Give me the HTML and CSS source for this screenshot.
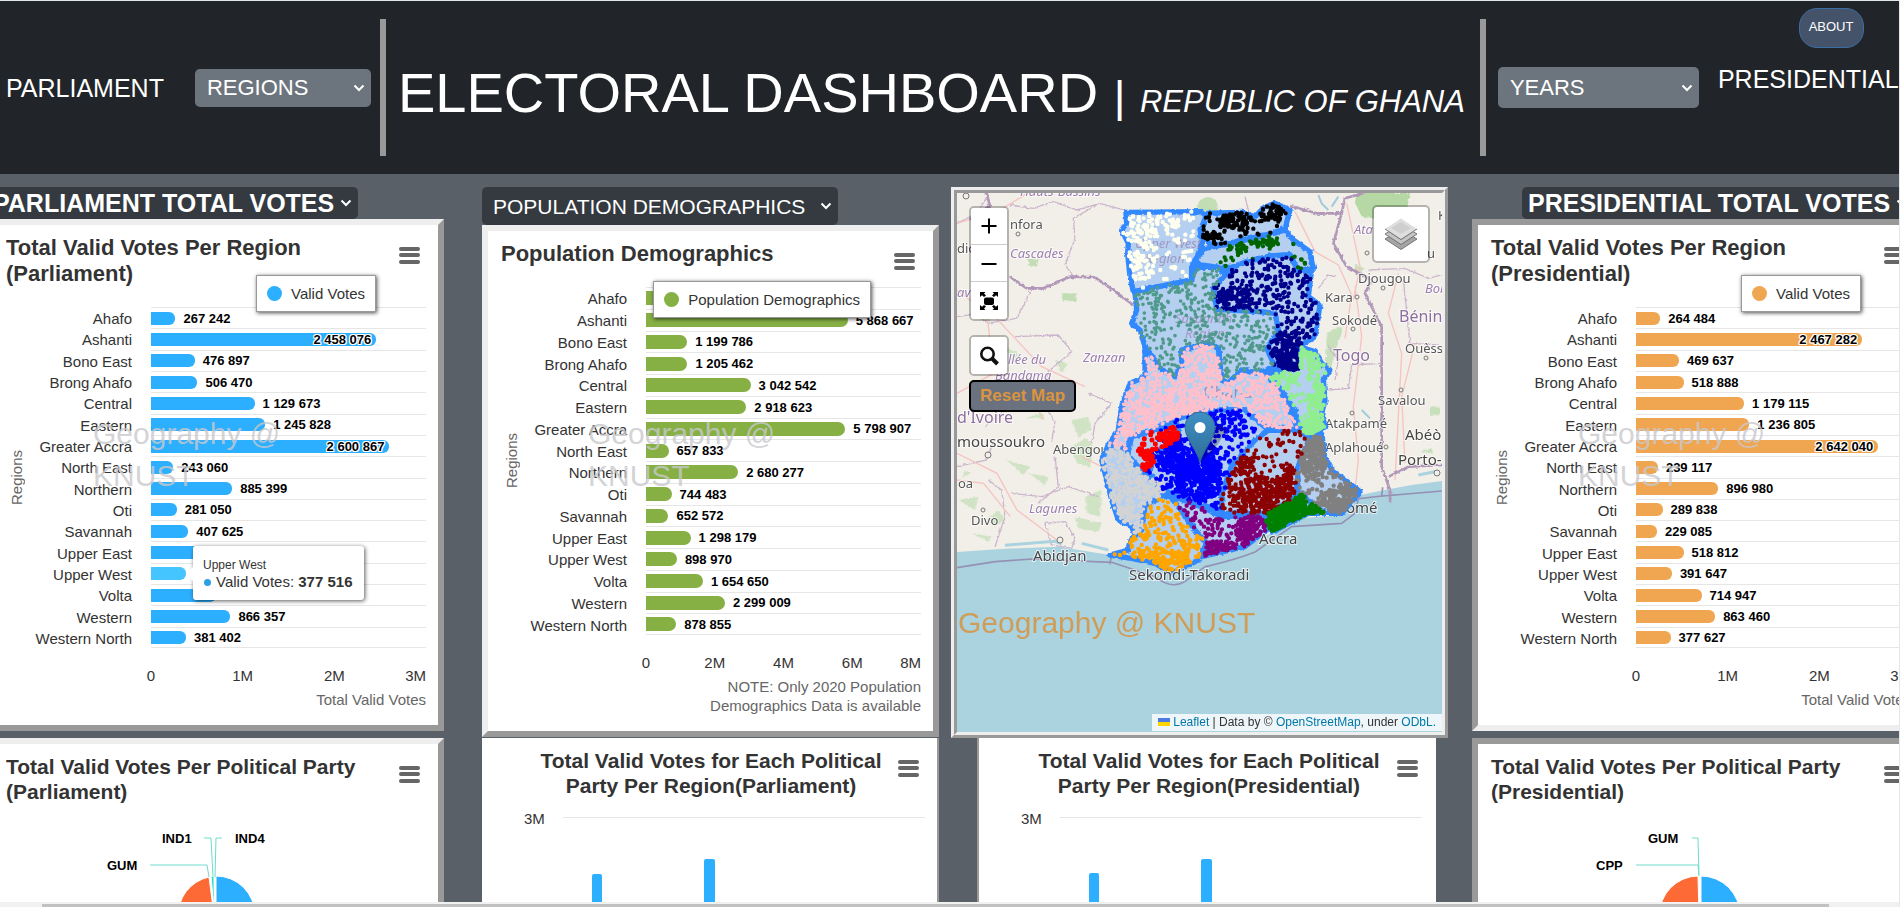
FILE: index.html
```
<!DOCTYPE html>
<html lang="en">
<head>
<meta charset="utf-8">
<title>Electoral Dashboard</title>
<link rel="stylesheet" href="styles.css">
</head>
<body>
<header class="topbar">
  <label class="topbar-label" for="regions">PARLIAMENT</label>
  <span class="pick pick-regions">
    <select id="regions"><option>REGIONS</option></select>
    <svg class="chev" viewBox="0 0 12 8"><path d="M1.5 1.5 6 6l4.500-4.500"/></svg>
  </span>
  <span class="rule"></span>
  <h1 class="brand">ELECTORAL DASHBOARD <span class="brand-bar">|</span> <em>REPUBLIC OF GHANA</em></h1>
  <span class="rule"></span>
  <span class="pick pick-years">
    <select id="years"><option>YEARS</option></select>
    <svg class="chev" viewBox="0 0 12 8"><path d="M1.500 1.500 6 6l4.500-4.500"/></svg>
  </span>
  <div class="topbar-end">
    <button class="about" type="button">ABOUT</button>
    <label class="topbar-label" for="years">PRESIDENTIAL</label>
  </div>
</header>

<main class="board">
  <section class="col col-parliament">
    <span class="pick tab tab-bold">
      <select aria-label="Parliament data"><option>PARLIAMENT TOTAL VOTES</option></select>
      <svg class="chev" viewBox="0 0 12 8"><path d="M1.500 1.500 6 6l4.500-4.500"/></svg>
    </span>
    <article class="card raised chart-card">
      <h2 class="title">Total Valid Votes Per Region (Parliament)</h2>
      <button class="menu" type="button" aria-label="Chart menu"></button>
      <div class="plot"><span class="ylabel">Regions</span><div class="rows" id="rows-parliament"></div></div>
      <div class="axis axis-3"><span>0</span><span>1M</span><span>2M</span><span class="last">3M</span></div>
      <p class="xlabel">Total Valid Votes</p>
      <div class="legend"><i class="dot blue"></i>Valid Votes</div>
      <p class="watermark">Geography @ KNUST</p>
    </article>
    <article class="card raised party-card">
      <h2 class="title small">Total Valid Votes Per Political Party (Parliament)</h2>
      <button class="menu" type="button" aria-label="Chart menu"></button>
      <svg class="pie" width="445" height="180" viewBox="0 0 445 180">
        <path class="slice blue-fill" d="M223 72A39 39 0 0 1 223 150Z"/>
        <path class="slice orange-fill" d="M221 150A39 39 0 0 1 216 73L221 111Z"/>
        <path class="slice teal-fill" d="M218 72.500h3l.5 38z"/>
        <path class="link" d="M211 34h7l2 39"/><path class="link" d="M229 34h-6l-1 39"/><path class="link" d="M157 61h57l2 12"/>
        <text x="169" y="39">IND1</text><text x="242" y="39">IND4</text><text x="114" y="66">GUM</text>
      </svg>
    </article>
  </section>

  <section class="col col-population">
    <span class="pick tab">
      <select aria-label="Population data"><option>POPULATION DEMOGRAPHICS</option></select>
      <svg class="chev" viewBox="0 0 12 8"><path d="M1.500 1.500 6 6l4.500-4.500"/></svg>
    </span>
    <article class="card raised chart-card">
      <h2 class="title">Population Demographics</h2>
      <button class="menu" type="button" aria-label="Chart menu"></button>
      <div class="plot"><span class="ylabel">Regions</span><div class="rows tall" id="rows-population"></div></div>
      <div class="axis axis-4"><span>0</span><span>2M</span><span>4M</span><span>6M</span><span class="last">8M</span></div>
      <p class="xlabel">NOTE: Only 2020 Population<br>Demographics Data is available</p>
      <div class="legend"><i class="dot green"></i>Population Demographics</div>
      <p class="watermark">Geography @ KNUST</p>
    </article>
    <article class="card flat party-card edge-right">
      <h2 class="title small centered">Total Valid Votes for Each Political Party Per Region(Parliament)</h2>
      <button class="menu" type="button" aria-label="Chart menu"></button>
      <svg class="columns" width="455" height="180" viewBox="0 0 455 180">
        <path class="grid-line" d="M81 19.500h362"/>
        <text x="42" y="26">3M</text>
        <rect x="110" y="76" width="10" height="120" rx="2"/><rect x="222" y="61" width="11" height="130" rx="2"/>
      </svg>
    </article>
  </section>

  <section class="col col-map">
    <div class="map">
      <svg class="map-art" width="485" height="539" viewBox="0 0 485 539">
        <defs>
          <filter id="rough" x="-5%" y="-5%" width="110%" height="110%">
            <feTurbulence type="fractalNoise" baseFrequency="0.090" numOctaves="2" seed="4" result="n"/>
            <feDisplacementMap in="SourceGraphic" in2="n" scale="10" xChannelSelector="R" yChannelSelector="G"/>
          </filter>
          <linearGradient id="pin" x1="0" y1="0" x2="0" y2="1"><stop offset="0" stop-color="#3f8fc4"/><stop offset="1" stop-color="#2e6c97"/></linearGradient>
        </defs>
        <rect width="485" height="539" fill="#f2efe9"/>
        <g transform="scale(.333333) translate(-36 -39)" fill="none">
          <g fill="#b5d8a5" filter="url(#rough)">
            <path d="M1235 39h160l-10 55-60 30-75-15-20-40z"/>
            <path d="M755 80q10-30 40-28 30 10 22 42-40 25-62-14zM350 340h42v24h-42zM250 235l30 5-5 20-25-5z" opacity=".8"/>
            <path d="M1145 460l35-20 15 5-25 70-15 65-12-30zM1230 250l30 15-30 20zM1455 680h30v25h-30zM1425 815l35-10 5 15z" opacity=".7"/>
            <path d="M180 500l40 20-10 30zM330 540l40 10-20 30zM160 620l40-10-10 35zM60 870l20 10-30 15zM380 720l50-10 10 40-40 20zM240 715l50-15 10 15zM375 800l50-25 20 25-10 60-40-10zM40 960l60-10-10 40zM120 1020l40-30 20 30-30 20zM420 950l50-20-5 80-40-10zM185 840l70 20-20 25zM250 880l60 10-10 25zM80 1060l60 10-10 15zM390 1010l80 20-10 25-60-10zM100 420l30-15 10 20zM240 590l30 10-20 15z" opacity=".55"/>
          </g>
          <g stroke="#cbb6cd" stroke-width="4" filter="url(#rough)">
            <path d="M195 75l70 10 60-20 70 25 70-20 90 25M455 75l-70 40 5 60-30 80 30 40M36 130l60-30 30-50M36 410l70-10 20 30 90-15 40-80M210 470l130-5 40 50-70 60-20 90 40 60-10 60M130 500l50 60-30 70 30 60-60 50M430 640l70 30-50 60-10 60M330 830l10 90-60 50M36 860l90-20 20-60M130 900l40 30 10 80-30 90M200 940l90 10 80-30 90 30M300 1030l60-5 30 50-10 30-60-10zM900 50l15 60 80 10M1170 290l-20-5-30 40M1270 270l110-5 70 30 40-10M1150 630l60-5 10-70 90-5M1375 300l20 190 90 5M1150 500l30 40-10 60"/>
          </g>
          <g stroke="#f6c3c0" stroke-width="4">
            <path d="M36 130l130-40 80-50M36 330l90 70 10 90-60 90M36 640l110-60 100 50 50 90M36 820l120 60 60 110 120 90M140 400l150 160 130 60M410 830l100 50M1050 95l60 120 70 40 40 90-20 130M1205 70l40 190-20 100M1230 320l20 150-25 210 15 160-10 90M1350 900l20-380-40-120 30-120M1380 850l-10-200 40-160M36 900l80 10 80 100"/>
          </g>
          <path d="M1120 45l10 25 20 20M1180 50l-20 30M1250 690l25 25M1430 1000l30 10" stroke="#9fcbdc" stroke-width="6"/>
          <path d="M36 1116l144-10 160-6 160 26 130 29 60 25 80-50 130-35 100-45 60-35 130-10 55-60 75-15 80-15 91-12v760H36z" fill="#aad3df"/>
          <path d="M180 1096l150-12 20 8M410 1090l80 20M1420 885l60-12" stroke="#aad3df" stroke-width="9"/>
          <g stroke="#b197b8" stroke-width="8" filter="url(#rough)" stroke-linejoin="round">
            <path d="M195 290l50 35h50l80-35 75 2 40 28 75 55M125 39l10 40-60 40M1035 78l80 22h75l10-45 55-15M1190 100l-25 90 40 70 75 40-20 40 50 100v420l25 70v35M990 75l45 10M600 140l-55-10M1491 855l-100 5-60 30"/>
          </g>
          <path d="M36 1163l114-18 110-8 240 10 130 43q50 40 90 14l60-44q90-20 150-44l110-76 150-10 40-30 10-44 70-8 3-26-3 26 181-15M500 1125l-6 28" stroke="#9491b4" stroke-width="5"/>
        </g>
        <g class="place">
          <text x="53" y="36">nfora</text><text x="0" y="60">dio</text><text x="401" y="90">Djougou</text><text x="481" y="27">K</text>
          <text x="368" y="109">Kara</text><text x="375" y="132">Sokodé</text><text x="448" y="160">Ouèss</text><text x="421" y="212">Savalou</text>
          <text x="368" y="235">Atakpamé</text><text x="368" y="259">Aplahoué</text><text x="96" y="261">Abengou</text><text x="1" y="295">oa</text>
          <text x="14" y="332">Divo</text><text x="470" y="65">u</text>
          <g class="city"><text x="0" y="254">moussoukro</text><text x="448" y="247">Abéò</text><text x="441" y="272">Porto-</text><text x="76" y="368">Abidjan</text>
          <text x="389" y="320">omé</text></g>
        </g>
        <g class="state"><text x="53" y="65">Cascades</text><text x="63" y="3">Hauts-Bassins</text><text x="468" y="100">Bor</text><text x="397" y="41">Ata</text><text x="126" y="169">Zanzan</text>
          <text x="51" y="171">llée du</text><text x="38" y="187">Bandama</text><text x="72" y="320">Lagunes</text><text x="0" y="104">ava</text></g>
        <g class="country"><text x="442" y="129">Bénin</text><text x="376" y="168">Togo</text><text x="0" y="230">d'Ivoire</text></g>
        <g fill="#f2efe9" stroke="#777"><circle cx="61" cy="41" r="2"/><circle cx="9" cy="3" r="3"/><circle cx="426" cy="95" r="2"/><circle cx="400" cy="104" r="2"/><circle cx="396" cy="136" r="2"/><circle cx="469" cy="165" r="2"/><circle cx="444" cy="197" r="2"/><circle cx="395" cy="220" r="2"/><circle cx="429" cy="254" r="2"/><circle cx="31" cy="262" r="3"/><circle cx="26" cy="317" r="2"/><circle cx="103" cy="347" r="3"/><circle cx="480" cy="280" r="3"/><circle cx="410" cy="60" r="2"/></g>
        <g id="regions-layer" transform="scale(.333333) translate(-36 -39)"></g>
        <g class="state faint"><text x="178" y="55">Upper West</text><text x="188" y="70">Region</text><text x="218" y="130">Savannah</text><text x="228" y="145">Region</text></g>
        <g class="country faint"><text x="246" y="205">Ghana</text></g>
        <g id="dots-layer" transform="scale(.333333) translate(-36 -39)"></g>
        <g class="place city"><text x="172" y="387">Sekondi-Takoradi</text><text x="302" y="351">Accra</text></g>
        <path d="M243 270q22-20 26-34l-9-6z" fill="#000" opacity=".25"/>
        <path d="M243 270C241 258 228 246 228 234a15 15 0 0 1 30 0C258 246 245 258 243 270Z" fill="url(#pin)" stroke="#2e6c97"/>
        <circle cx="243" cy="234.500" r="5.500" fill="#fff"/>
      </svg>
      <div class="map-tools">
        <div class="tool-group">
          <button type="button" aria-label="Zoom in"><svg viewBox="0 0 20 20"><path d="M10 2.500v15M2.500 10h15" stroke="#000" stroke-width="2"/></svg></button>
          <button type="button" aria-label="Zoom out"><svg viewBox="0 0 20 20"><path d="M2.500 11h15" stroke="#000" stroke-width="2"/></svg></button>
          <button type="button" aria-label="Fullscreen"><svg viewBox="0 0 20 20"><rect x="5" y="6.500" width="10" height="7.500" rx="2"/><path d="M1 1h5.500L5 2.500l2 2L5 6 3 4.300 1 6zM19 1v5l-2-1.700L15 6l-2-1.500 2-2L13.500 1zM1 19v-5l2 1.700L5 14l2 1.500-2 2L6.500 19zM19 19h-5.500l1.500-1.500-2-2 2-1.500 2 1.700 2-1.700z"/></svg></button>
        </div>
        <div class="tool-group">
          <button type="button" aria-label="Search"><svg viewBox="0 0 20 20"><circle cx="8.500" cy="8" r="6.200" fill="none" stroke="#111" stroke-width="2.600"/><path d="M13 12.500l5.500 5.500" stroke="#111" stroke-width="4"/></svg></button>
        </div>
        <button class="reset" type="button">Reset Map</button>
      </div>
      <button class="layers" type="button" aria-label="Layers">
        <svg viewBox="0 0 34 34"><path d="M1 22 17 32.500 33 22l-4-2.500-12 8-12-8z" fill="#a5a5a5" stroke="#777"/><path d="M1 17 17 27.500 33 17l-4-2.500-12 8-12-8z" fill="#c4c4c4" stroke="#777"/><path d="M1 12 17 1.500 33 12 17 22.500z" fill="#dedede"/><path d="M7 11 17 5l10 6-10 6z" fill="#cfcfcf"/><path d="M1 12l16 10.500L33 12" fill="none" stroke="#777"/></svg>
      </button>
      <p class="map-mark">Geography @ KNUST</p>
      <p class="credit"><svg viewBox="0 0 12 8"><path fill="#4c7be1" d="M0 0h12v4H0z"/><path fill="#ffd500" d="M0 4h12v4H0z"/></svg> <a href="#leaflet">Leaflet</a> | Data by © <a href="#osm">OpenStreetMap</a>, under <a href="#odbl">ODbL.</a></p>
    </div>
    <article class="card flat party-card edge-left">
      <h2 class="title small centered">Total Valid Votes for Each Political Party Per Region(Presidential)</h2>
      <button class="menu" type="button" aria-label="Chart menu"></button>
      <svg class="columns" width="455" height="180" viewBox="0 0 455 180">
        <path class="grid-line" d="M81 19.500h362"/>
        <text x="42" y="26">3M</text>
        <rect x="110" y="75" width="10" height="120" rx="2"/><rect x="222" y="61" width="11" height="130" rx="2"/>
      </svg>
    </article>
  </section>

  <section class="col col-presidential">
    <span class="pick tab tab-bold">
      <select aria-label="Presidential data"><option>PRESIDENTIAL TOTAL VOTES</option></select>
      <svg class="chev" viewBox="0 0 12 8"><path d="M1.500 1.500 6 6l4.500-4.500"/></svg>
    </span>
    <article class="card sunken chart-card">
      <h2 class="title">Total Valid Votes Per Region (Presidential)</h2>
      <button class="menu" type="button" aria-label="Chart menu"></button>
      <div class="plot"><span class="ylabel">Regions</span><div class="rows" id="rows-presidential"></div></div>
      <div class="axis axis-3"><span>0</span><span>1M</span><span>2M</span><span class="last">3M</span></div>
      <p class="xlabel">Total Valid Votes</p>
      <div class="legend"><i class="dot orange"></i>Valid Votes</div>
      <p class="watermark">Geography @ KNUST</p>
    </article>
    <article class="card sunken party-card">
      <h2 class="title small">Total Valid Votes Per Political Party (Presidential)</h2>
      <button class="menu" type="button" aria-label="Chart menu"></button>
      <svg class="pie" width="445" height="180" viewBox="0 0 445 180">
        <path class="slice blue-fill" d="M223 72A39 39 0 0 1 223 150Z"/>
        <path class="slice orange-fill" d="M221 150A39 39 0 0 1 220 72L221 111Z"/>
        <path class="link" d="M214 34h6l1 37"/><path class="link" d="M158 61h62l1 11"/>
        <text x="170" y="39">GUM</text><text x="118" y="66">CPP</text>
      </svg>
    </article>
  </section>
</main>
<div class="hscroll"><span></span></div>
<script src="script.js"></script>
</body>
</html>
```
FILE: styles.css
```
* { box-sizing: border-box; }
body {
  margin: 0;
  height: 100vh;
  display: flex;
  flex-direction: column;
  overflow: hidden;
  background: #5a6068;
  font-family: "Liberation Sans", Arial, sans-serif;
  font-size: 15px;
  color: #333;
  border-right: 1px solid #e4e6e8;
}
p, h1, h2 { margin: 0; }
button, select { font-family: inherit; margin: 0; }

.topbar {
  flex: none;
  display: flex;
  align-items: center;
  height: 174px;
  padding-left: 6px;
  background: #212529;
  border-top: 1px solid #dfe7ea;
  color: #fff;
  white-space: nowrap;
}
.topbar-label { font-size: 25px; line-height: 30px; }
.pick { position: relative; display: block; }
.pick select {
  appearance: none;
  display: block;
  width: 100%;
  height: 100%;
  border: 0;
  border-radius: 5px;
  color: #fff;
  background: #6c757d;
  font-size: 22px;
  padding: 0 12px;
}
.pick .chev {
  position: absolute;
  right: 6px;
  top: 50%;
  width: 12px;
  height: 8px;
  margin-top: -4px;
  fill: none;
  stroke: #fff;
  stroke-width: 2;
}
.pick-regions { width: 176px; height: 38px; margin-left: 31px; }
.pick-years { width: 201px; height: 41px; margin-left: 12px; }
.rule { width: 6px; height: 137px; background: #999; margin-left: 9px; }
.brand { font-size: 56px; font-weight: 400; line-height: 64px; padding: 20px 6px 0 12px; }
.brand-bar { font-size: 45px; }
.brand em { font-size: 31px; margin-left: -1px; }
.topbar-end {
  align-self: flex-start;
  display: flex;
  flex-direction: column;
  gap: 16px;
  margin-left: 19px;
  padding-top: 7px;
}
.about {
  align-self: flex-end;
  width: 65px;
  height: 40px;
  margin-right: 35px;
  padding: 0 0 4px;
  border: 1px solid #3a6ea5;
  border-radius: 18px;
  background: #44526a;
  color: #fff;
  font-size: 13px;
}

.board {
  flex: 1;
  min-height: 0;
  display: grid;
  grid-template-columns: 457fr 38fr 457fr 12fr 497fr 24fr 457fr;
  align-items: start;
  width: calc(100% + 43px);
  margin-left: -13px;
  padding-top: 13px;
  overflow: hidden;
}
.col { min-width: 0; }
.col-parliament { grid-column: 1; }
.col-population { grid-column: 3; }
.col-map { grid-column: 5; }
.col-presidential { grid-column: 7; }

.tab { width: max-content; height: 38px; }
.tab select { background: #343a40; font-size: 21px; padding: 0 32px 0 11px; }
.tab-bold { height: 32px; }
.tab-bold select { font-size: 25px; font-weight: 700; padding: 0 23px 0 6px; }
.col-presidential .tab { margin-left: 50px; }

.card { position: relative; background: #fff; }
.raised { border: 6px solid; border-color: #eee #999 #999 #eee; }
.sunken { border: 6px solid; border-color: #999 #eee #eee #999; }
.edge-right { border-right: 2px solid #999; }
.edge-left { border-left: 2px solid #999; margin: 0 12px 0 26px; }
.chart-card { display: flex; flex-direction: column; height: 512px; }
.party-card { height: 400px; margin-top: 7px; }
.party-card.edge-right { margin-top: 1px; }
.party-card.edge-left { margin-top: 0; }

.title { padding: 10px 70px 0 13px; font-size: 22px; line-height: 26px; font-weight: 700; }
.title.small { font-size: 21px; line-height: 25px; }
.title.centered { padding: 10px 42px 0 45px; text-align: center; }
.menu {
  position: absolute;
  right: 18px;
  top: 22px;
  width: 21px;
  height: 17px;
  padding: 0;
  border: 0;
  background: none;
}
.menu::before, .menu::after {
  content: "";
  display: block;
  height: 4px;
  border-radius: 2px;
  background: #666;
}
.menu::before { margin-bottom: 9px; box-shadow: 0 6px #666; }

.plot { flex: 1; display: flex; margin-top: 20px; min-height: 0; }
.ylabel {
  align-self: center;
  width: 18px;
  margin-left: 15px;
  line-height: 18px;
  writing-mode: vertical-rl;
  transform: rotate(180deg);
  color: #666;
}
.rows { flex: 1; display: grid; grid-auto-rows: 1fr; }
.row { display: flex; align-items: center; gap: 19px; margin-right: 12px; min-height: 0; }
.row-name { width: 106px; padding-top: 3px; text-align: right; white-space: nowrap; line-height: 18px; }
.track {
  position: relative;
  flex: 1;
  align-self: stretch;
  display: flex;
  align-items: center;
  border-top: 1px solid #e6e6e6;
}
.row:last-child .track { border-bottom: 1px solid #e6e6e6; }
.bar { flex: none; height: 13px; border-radius: 0 6px 6px 0; background: #2caffe; }
.tall .bar { height: 14px; border-radius: 0 7px 7px 0; background: #86b044; }
#rows-presidential .bar { background: #f0a650; }
.bar.hot { background: #45c5ff; }
.value {
  margin-left: 8px;
  color: #000;
  font-size: 13px;
  font-weight: 700;
  white-space: nowrap;
}
.value.inside { width: 60px; margin-left: -65px; text-align: right; text-shadow: 1px 0 #fff, -1px 0 #fff, 0 1px #fff, 0 -1px #fff, 1px 1px #fff, -1px -1px #fff, 1px -1px #fff, -1px 1px #fff; }
.axis { display: grid; margin: 19px 12px 0 158px; line-height: 18px; text-align: center; }
.axis-3 { grid-template-columns: repeat(3, 1fr); }
.axis-4 { grid-template-columns: repeat(4, 1fr); }
.axis span { grid-row: 1; margin-left: -50%; margin-right: 50%; }
.axis span:nth-child(1) { grid-column: 1; }
.axis span:nth-child(2) { grid-column: 2; }
.axis span:nth-child(3) { grid-column: 3; }
.axis span:nth-child(4) { grid-column: 4; }
.axis span.last { grid-column: -2; justify-self: end; margin: 0; }
.xlabel { margin: 5px 12px 16px 0; line-height: 19px; text-align: right; color: #666; }
.legend {
  position: absolute;
  top: 50px;
  right: 62px;
  display: flex;
  align-items: center;
  gap: 9px;
  height: 37px;
  padding: 0 10px;
  border: 1px solid #999;
  background: #fff;
  box-shadow: 1px 1px 4px rgba(0, 0, 0, .7);
  white-space: nowrap;
}
.dot { width: 15px; height: 15px; border-radius: 50%; }
.blue { background: #2caffe; }
.green { background: #86b044; }
.orange { background: #f0a650; }
.watermark {
  position: absolute;
  left: 100px;
  top: 188px;
  width: 200px;
  font-size: 30px;
  line-height: 42px;
  color: rgba(200, 200, 204, .8);
  pointer-events: none;
}
.col-population .watermark { top: 182px; }

.tip {
  position: absolute;
  z-index: 2;
  left: 42px;
  top: -18px;
  width: 171px;
  height: 54px;
  padding: 11px 0 0 10px;
  border-radius: 3px;
  background: #fff;
  box-shadow: 1px 1px 4px rgba(0, 0, 0, .65);
  font-size: 15px;
  line-height: 18px;
  white-space: nowrap;
}
.tip small { display: block; font-size: 12px; line-height: 16px; }
.tip::before {
  content: "";
  position: absolute;
  left: -7px;
  top: 21px;
  border: 7px solid transparent;
  border-left: 0;
  border-right-color: #fff;
}
.tip i { display: inline-block; width: 7px; height: 7px; margin: 0 5px 1px 1px; border-radius: 50%; background: #2c9fe5; }

.pie, .columns { display: block; }
.pie text { font-size: 13px; font-weight: 700; fill: #000; }
.columns text { font-size: 15px; fill: #333; }
.columns rect, .blue-fill { fill: #2caffe; }
.orange-fill { fill: #fe6a35; }
.teal-fill { fill: #2ee0ca; }
.link { fill: none; stroke: #6fdccb; }
.grid-line { stroke: #e6e6e6; }
.slice { stroke: #fff; stroke-width: 1; }

.map {
  position: relative;
  height: 551px;
  border: 3px solid;
  border-color: #eee #999 #999 #eee;
  overflow: hidden;
  background: #aad3df;
}
.map::after {
  content: "";
  position: absolute;
  inset: 0;
  border: 3px solid;
  border-color: #999 #eee #eee #999;
  pointer-events: none;
}
.map-art { display: block; margin: 3px; }
.map-art text { font-family: "Noto Sans", sans-serif; paint-order: stroke; stroke: rgba(255, 255, 255, .7); stroke-width: 2px; }
.place { font-size: 13px; fill: #555; }
.city { font-size: 15px; fill: #444; }
.state { font-size: 13px; font-style: italic; fill: #9b7fae; }
.country { font-size: 16px; fill: #8d6f9e; }
.map-art .faint text { stroke: none; opacity: .7; }
.map-tools { position: absolute; left: 15px; top: 16px; display: flex; flex-direction: column; align-items: flex-start; }
.tool-group { display: flex; flex-direction: column; border: 2px solid rgba(0, 0, 0, .25); border-radius: 5px; background-clip: padding-box; margin-bottom: 14px; overflow: hidden; }
.tool-group button { display: block; width: 36px; height: 37px; padding: 0; border: 0; border-bottom: 1px solid #ccc; background: #fff; }
.tool-group button:last-child { border-bottom: 0; }
.tool-group svg { display: block; width: 20px; height: 20px; margin: auto; }
.reset {
  height: 32px;
  margin-top: -10px;
  padding: 0 9px;
  border: 2px solid #000;
  border-radius: 5px;
  background: #6a7280;
  color: #db943f;
  font-size: 17px;
  font-weight: 700;
}
.layers { position: absolute; right: 15px; top: 15px; width: 58px; height: 58px; padding: 0; border: 2px solid rgba(0, 0, 0, .25); border-radius: 5px; background: #fff; background-clip: padding-box; }
.layers svg { display: block; width: 34px; height: 34px; margin: auto; }
.map-mark { position: absolute; left: 4px; bottom: 94px; font-size: 30px; line-height: 36px; color: #cf9d58; }
.credit { position: absolute; right: 3px; bottom: 4px; padding: 0 6px; font-size: 12px; line-height: 17px; background: rgba(255, 255, 255, .8); }
.credit svg { width: 12px; height: 8px; }
.credit a { color: #0078a8; text-decoration: none; }

.hscroll { flex: none; position: relative; height: 5px; padding: 2px 70px 0 42px; background: #f1f1f1; }
.hscroll span { display: block; height: 3px; background: #c1c1c1; }
```
FILE: script.js
```
const names = ["Ahafo", "Ashanti", "Bono East", "Brong Ahafo", "Central", "Eastern", "Greater Accra", "North East",
  "Northern", "Oti", "Savannah", "Upper East", "Upper West", "Volta", "Western", "Western North"];
const charts = {
  parliament: { max: 3e6, data: [267242, 2458076, 476897, 506470, 1129673, 1245828, 2600867, 243060, 885399, 281050, 407625, 520376, 377516, 713076, 866357, 381402], hot: 12 },
  population: { max: 8e6, data: [564668, 5868667, 1199786, 1205462, 3042542, 2918623, 5798907, 657833, 2680277, 744483, 652572, 1298179, 898970, 1654650, 2299009, 878855] },
  presidential: { max: 3e6, data: [264484, 2467282, 469637, 518888, 1179115, 1236805, 2642040, 239117, 896980, 289838, 229085, 518812, 391647, 714947, 863460, 377627] }
};
/* Rows whose value would sit fully under the legend or the tooltip carry no value label. */
const covered = { parliament: [11, 12], population: [0] };
const spaced = n => String(n).replace(/\B(?=(\d{3})+$)/g, " ");
for (const [key, chart] of Object.entries(charts)) {
  document.getElementById("rows-" + key).innerHTML = chart.data.map((v, i) => {
    const share = v / chart.max * 100;
    const inside = share > 80;
    const hot = chart.hot === i;
    const value = (covered[key] || []).includes(i) ? "" : `<span class="value${inside ? " inside" : ""}">${spaced(v)}</span>`;
    const tip = hot ? `<div class="tip"><small>${names[i]}</small><i></i>Valid Votes: <b>${spaced(v)}</b></div>` : "";
    return `<div class="row"><span class="row-name">${names[i]}</span><div class="track"><div class="bar${hot ? " hot" : ""}" style="width:${share}%"></div>${value}${tip}</div></div>`;
  }).join("");
}

/* Each region: dot colour, number of spread dots, outline, dense clusters as [x, y, radius x, radius y, count]. */
const regions = [
  ["#fffff0", 75, "543,97 770,95 785,110 765,150 775,180 755,235 740,262 740,300 565,335 555,290 548,220 550,190 530,150 545,130", [[590, 200, 50, 110, 110], [670, 125, 40, 25, 20]]],
  ["#000000", 60, "785,100 890,97 930,110 960,80 990,70 1035,90 1020,145 985,160 900,175 860,190 800,195 765,165", [[870, 120, 50, 25, 60], [980, 95, 45, 25, 45], [800, 175, 30, 20, 25]]],
  ["#006400", 26, "765,255 750,240 780,205 860,190 985,160 1020,150 1045,180 1095,215 1105,265 1060,275 1035,225 975,228 905,245 860,262 820,262", [[955, 190, 45, 14, 40], [890, 205, 18, 16, 14], [1075, 245, 12, 10, 6]]],
  ["#00008b", 300, "865,262 905,245 975,228 1035,225 1060,275 1100,270 1090,350 1125,375 1110,470 1060,500 1060,575 990,560 965,505 1000,450 990,400 940,395 815,388 805,325 840,285", [[870, 355, 55, 35, 80], [1020, 500, 50, 50, 110], [1030, 545, 35, 30, 70]]],
  ["#4f9a8c", 400, "570,335 740,300 750,262 820,262 840,285 805,325 815,388 940,395 990,400 1000,450 965,505 990,560 940,580 890,570 850,610 830,600 820,505 790,490 710,510 710,560 690,590 650,570 600,500 585,450 560,430 575,390", [], 6],
  ["#ffc0cb", 900, "600,500 650,570 690,590 710,560 710,510 790,490 820,505 830,600 850,610 890,570 940,580 985,590 1000,620 1020,660 1060,750 960,740 900,690 800,690 700,715 650,740 560,770 545,810 490,795 520,750 530,680 555,610 600,590", [[700, 670, 90, 45, 110], [580, 730, 60, 50, 60]], 6],
  ["#90ee90", 60, "1065,500 1110,515 1130,550 1155,570 1135,600 1140,660 1130,700 1140,740 1095,770 1070,750 1060,735 1050,690 1000,620 975,595 1010,570 1060,560", [[1115, 670, 25, 90, 130], [1095, 540, 40, 35, 50], [1015, 600, 35, 30, 35], [1100, 740, 30, 30, 40]]],
  ["#808080", 160, "1095,770 1130,760 1140,830 1160,870 1200,900 1245,935 1190,1000 1130,1000 1060,945 1050,870 1080,800", [[1105, 830, 40, 70, 180], [1190, 960, 60, 40, 160]]],
  ["#d3d3d3", 320, "490,795 545,810 570,850 600,890 650,905 660,940 600,980 595,1040 575,1075 560,1040 520,1020 500,960 485,900 470,840", [[620, 915, 45, 30, 40]], 6],
  ["#0000ff", 300, "640,740 700,715 800,690 900,690 970,750 930,780 900,830 860,850 860,900 830,940 830,990 770,975 700,955 650,930 620,890 600,870 630,800", [[740, 840, 90, 70, 340], [760, 900, 70, 70, 200], [840, 730, 60, 40, 50]]],
  ["#ff0000", 26, "650,745 700,735 700,780 650,805 625,850 605,890 570,850 548,825 560,770", [[670, 765, 30, 28, 50], [600, 830, 30, 35, 24]], 8],
  ["#8b0000", 120, "930,780 970,750 1060,752 1095,772 1055,870 1060,900 1050,950 1000,1000 830,1000 830,940 860,860", [[890, 860, 40, 30, 50], [950, 950, 100, 60, 290], [1025, 900, 30, 50, 50]]],
  ["#ffa500", 180, "600,980 655,945 700,965 720,1010 750,1050 785,1090 760,1140 680,1180 630,1150 560,1135 495,1125 550,1110 555,1080 590,1050", [[680, 1150, 60, 25, 70], [630, 1120, 60, 20, 30], [730, 1110, 30, 35, 30]]],
  ["#800080", 120, "660,930 700,955 780,985 830,1010 960,1005 965,1050 900,1100 770,1130 785,1090 750,1050 720,1005", [[920, 1055, 50, 50, 150], [820, 1105, 60, 25, 80]]],
  ["#008000", 260, "960,1005 1040,960 1070,940 1100,970 1145,1000 1090,1000 1030,1030 985,1055 965,1045", [[1040, 1005, 70, 30, 160]]]
];
let seed = 20;
const rand = () => { seed = (seed * 16807) % 2147483647; return seed / 2147483647; };
const inside = (x, y, pts) => {
  let hit = false;
  for (let i = 0, j = pts.length - 1; i < pts.length; j = i++) {
    const [xi, yi] = pts[i], [xj, yj] = pts[j];
    if ((yi > y) !== (yj > y) && x < (xj - xi) * (y - yi) / (yj - yi) + xi) hit = !hit;
  }
  return hit;
};
let shapes = "", dots = "";
for (const [color, count, outline, clusters, r = 7] of regions) {
  const pts = outline.split(" ").map(p => p.split(",").map(Number));
  const xs = pts.map(p => p[0]), ys = pts.map(p => p[1]);
  const x0 = Math.min(...xs), y0 = Math.min(...ys), w = Math.max(...xs) - x0, h = Math.max(...ys) - y0;
  shapes += `<polygon points="${outline}"/>`;
  let d = "";
  const put = (x, y) => { if (inside(x, y, pts)) { d += `M${x.toFixed(0)} ${y.toFixed(0)}h0`; return 1; } return 0; };
  for (let n = 0, guard = 0; n < count && guard < 9000; guard++) n += put(x0 + rand() * w, y0 + rand() * h);
  for (const [cx, cy, rx, ry, c] of clusters)
    for (let n = 0; n < c; n++) {
      const a = rand() * 6.283, q = Math.sqrt(rand());
      put(cx + Math.cos(a) * rx * q, cy + Math.sin(a) * ry * q);
    }
  dots += `<path d="${d}" fill="none" stroke="${color}" stroke-width="${r * 2 - 1}" stroke-linecap="round"/>`;
}
document.getElementById("regions-layer").innerHTML =
  `<g fill="#b4cff0" stroke="#3388ff" stroke-width="16" stroke-linejoin="round" filter="url(#rough)"><path fill="#3388ff" d="M600 340 980 240 1060 500 1050 740 1090 780 1070 900 1030 960 960 1005 700 960 650 930 600 860 570 790 700 400z"/>${shapes}</g>`;
document.getElementById("dots-layer").innerHTML = dots;
```
